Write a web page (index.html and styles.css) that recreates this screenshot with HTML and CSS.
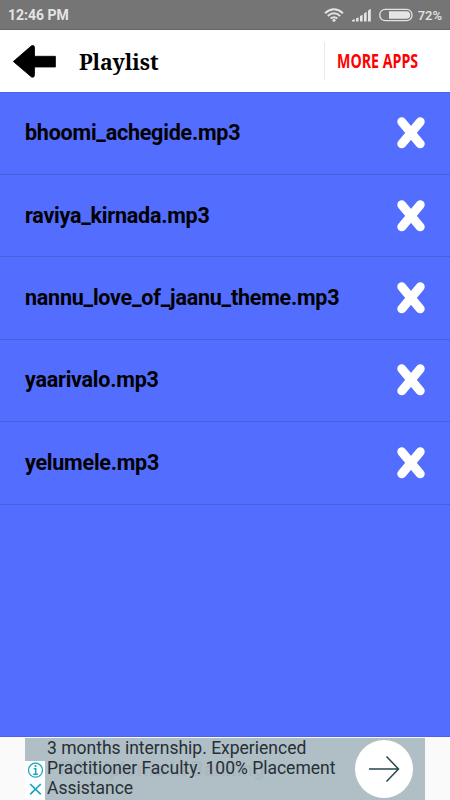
FILE: index.html
```html
<!DOCTYPE html>
<html lang="en">

<head>
    <meta charset="UTF-8">
    <meta name="viewport" content="width=device-width, initial-scale=1.0">
    <title>Playlist</title>
    <link rel="stylesheet" href="styles.css">
</head>

<body>
    <!-- Status bar -->
    <div class="status-bar">
        <span class="time">12:46 PM</span>
        <div class="status-icons">
            <svg class="wifi" width="20" height="14" viewBox="0 0 20 14" fill="none" stroke="#e4e4e4" stroke-width="1.9">
                <path d="M1 5.2Q10 -2.6 19 5.2M3.8 8Q10 2.6 16.2 8M6.6 10.6Q10 7.8 13.4 10.6" />
                <circle cx="10" cy="12.2" r="1.5" fill="#e4e4e4" stroke="none" />
            </svg>
            <svg class="signal" width="19" height="14" viewBox="0 0 19 14" fill="#e4e4e4">
                <path d="M0 12.2l2.8-1.2v2.5H0zM4 10.5l2.6-1.2v4.2H4zM8 8.1l2.6-1.4v6.8H8zM12 5.4l2.6-1.7v9.8H12zM16 2.6l2.8-1.9v12.8H16z" />
            </svg>
            <svg class="battery" width="34" height="14" viewBox="0 0 34 14">
                <rect x="0.8" y="1.3" width="32.2" height="11.4" rx="5.4" fill="none" stroke="#e4e4e4" stroke-width="1.3" />
                <path d="M10 3.2h17.4a3.8 3.8 0 0 1 0 7.6H10z" fill="#e4e4e4" />
            </svg>
            <span class="percent">72%</span>
        </div>
    </div>

    <!-- Header -->
    <header class="header">
        <svg class="back" width="46" height="36" viewBox="0 0 46 36">
            <path d="M2.3 18.5L20.5 2.8Q23.5 1.5 23.5 5V13.3H44.4V24H23.5V31.5Q23.5 35 20.5 34Z" stroke="#000" stroke-width="0.8" stroke-linejoin="round" />
        </svg>
        <h1>Playlist</h1>
        <div class="more">
            <span class="more-text">MORE APPS</span>
        </div>
    </header>

    <ul class="playlist">
        <li class="song">
            <span>bhoomi_achegide.mp3</span>
            <svg class="remove" width="28" height="32" viewBox="0 0 28 32"><path d="M4.8 4.8L23.2 26.8M23.2 4.8L4.8 26.8" /></svg>
        </li>
        <li class="song">
            <span>raviya_kirnada.mp3</span>
            <svg class="remove" width="28" height="32" viewBox="0 0 28 32"><path d="M4.8 4.8L23.2 26.8M23.2 4.8L4.8 26.8" /></svg>
        </li>
        <li class="song">
            <span>nannu_love_of_jaanu_theme.mp3</span>
            <svg class="remove" width="28" height="32" viewBox="0 0 28 32"><path d="M4.8 4.8L23.2 26.8M23.2 4.8L4.8 26.8" /></svg>
        </li>
        <li class="song">
            <span>yaarivalo.mp3</span>
            <svg class="remove" width="28" height="32" viewBox="0 0 28 32"><path d="M4.8 4.8L23.2 26.8M23.2 4.8L4.8 26.8" /></svg>
        </li>
        <li class="song">
            <span>yelumele.mp3</span>
            <svg class="remove" width="28" height="32" viewBox="0 0 28 32"><path d="M4.8 4.8L23.2 26.8M23.2 4.8L4.8 26.8" /></svg>
        </li>
    </ul>

    <!-- Ad banner -->
    <div class="ad-strip">
        <div class="ad">
            <div class="ad-title">PG Diploma in Banking</div>
            <div class="ad-choices">
                <svg width="18" height="37" viewBox="0 0 18 37" fill="none" stroke="#18a5c4">
                    <circle cx="9.5" cy="9.2" r="7" stroke-width="1.3" />
                    <path d="M7.7 7.8h2v5.4M7.3 13.3h4.6" stroke-width="1.5" />
                    <circle cx="9.5" cy="5.1" r="1.1" fill="#18a5c4" stroke="none" />
                    <path d="M4.2 23L14.8 33.4M14.8 23L4.2 33.4" stroke-width="1.7" />
                </svg>
            </div>
            <p class="ad-text">3 months internship. Experienced<br>Practitioner Faculty. 100% Placement<br>Assistance</p>
            <div class="ad-button">
                <svg width="32" height="28" viewBox="0 0 32 28" fill="none" stroke="#29454f" stroke-width="1.5">
                    <path d="M1 14H30.5M18.5 1.5L30.5 14L18.5 26.5" />
                </svg>
            </div>
        </div>
    </div>
</body>

</html>
```

FILE: styles.css
```css
* {
    box-sizing: border-box;
}

body {
    font-family: 'Roboto', sans-serif;
    background-color: #536dfe;
    margin: 0;
    height: 800px;
    display: flex;
    flex-direction: column;
    overflow: hidden;
}

.status-bar {
    flex: none;
    height: 30px;
    padding: 1px 8px 0;
    display: flex;
    align-items: center;
    justify-content: space-between;
    background-color: #757575;
    border-bottom: 1px solid #686464;
    color: #e4e4e4;
    font-size: 14px;
    font-weight: bold;
}

.status-icons {
    display: flex;
    align-items: center;
}

.signal {
    margin-left: 8px;
}

.battery {
    margin-left: 8px;
}

.percent {
    margin-left: 5px;
    font-size: 13px;
    font-weight: 500;
}

.header {
    flex: none;
    height: 62.6px;
    display: flex;
    align-items: center;
    background-color: #fff;
    border-bottom: 1px solid #4a64ef;
}

.back {
    margin-left: 11px;
}

h1 {
    margin: 1px 0 0 22px;
    font-family: 'Noto Serif', 'DejaVu Serif', serif;
    font-size: 21.3px;
    font-weight: bold;
    color: #000;
}

.more {
    margin-left: auto;
    width: 126px;
    height: 38px;
    padding-left: 12px;
    border-left: 1px solid #e8e8e8;
    display: flex;
    align-items: center;
}

.more-text {
    font-family: 'Open Sans', sans-serif;
    font-size: 20px;
    font-weight: bold;
    color: #f00;
    white-space: nowrap;
    transform: scaleX(0.71);
    transform-origin: left center;
}

.playlist {
    flex: 1;
    margin: 0;
    padding: 0;
    list-style: none;
}

.song {
    height: 82.4px;
    padding: 0 25px;
    display: flex;
    align-items: center;
    justify-content: space-between;
    border-bottom: 1px solid #4962dc;
    font-size: 21.5px;
    font-weight: bold;
    letter-spacing: -0.23px;
    color: #000;
}

.song span {
    padding-bottom: 1px;
}

.remove {
    fill: none;
    stroke: #fff;
    stroke-width: 9;
    stroke-linecap: round;
}

.ad-strip {
    flex: none;
    height: 64px;
    padding: 1px 25px 0;
    background-color: #fafafa;
    border-top: 1px solid #4a64ef;
}

.ad {
    position: relative;
    height: 62px;
    display: flex;
    background-color: #b0bec5;
    overflow: hidden;
}

/* previous headline fading out behind the text */
.ad-title {
    position: absolute;
    left: 34px;
    top: 19px;
    font-size: 20px;
    font-weight: bold;
    color: #a9b7be;
    white-space: nowrap;
}

.ad-choices {
    margin-top: 23px;
    width: 20px;
    height: 39px;
    padding-left: 1px;
    background-color: #fff;
}

.ad-text {
    position: relative;
    margin: 0 0 0 2px;
    font-size: 17.5px;
    line-height: 20px;
    color: #263036;
    white-space: nowrap;
}

.ad-button {
    margin: 2px 12px 0 auto;
    width: 58px;
    height: 58px;
    border-radius: 50%;
    background-color: #fff;
    display: flex;
    align-items: center;
    justify-content: center;
}
```
